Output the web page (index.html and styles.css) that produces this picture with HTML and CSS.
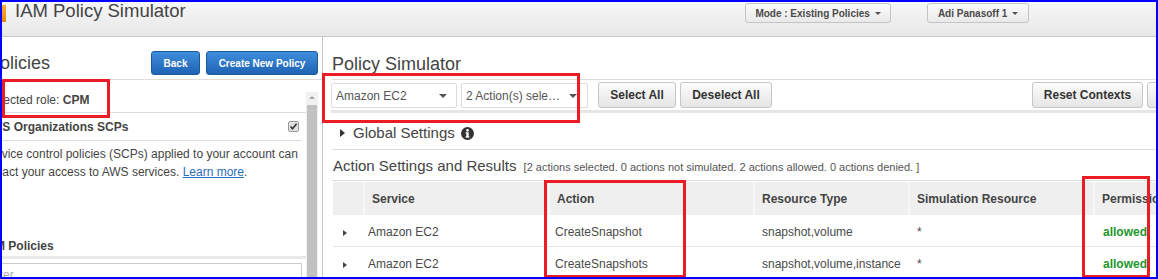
FILE: index.html
```html
<!DOCTYPE html>
<html lang="en">
<head>
    <meta charset="UTF-8">
    <title>IAM Policy Simulator</title>
    <link rel="stylesheet" href="styles.css">
</head>
<body>
<div class="page">
    <header class="topbar">
        <div class="brand">
            <span class="logo"></span>
            <span class="app-title">IAM Policy Simulator</span>
        </div>
        <div class="top-actions">
            <button class="top-btn mode-btn">Mode : Existing Policies <span class="caret"></span></button>
            <button class="top-btn user-btn">Adi Panasoff 1 <span class="caret"></span></button>
        </div>
    </header>

    <div class="main">
        <!-- left: policies -->
        <aside class="left">
            <div class="left-head">
                <h2 class="left-title">Policies</h2>
                <div class="left-btns">
                    <button class="btn-blue back-btn">Back</button>
                    <button class="btn-blue new-btn">Create New Policy</button>
                </div>
            </div>
            <div class="left-body">
                <div class="left-scroll">
                    <div class="role-row">Selected role: <b>CPM</b></div>
                    <div class="scp-head">
                        <span>AWS Organizations SCPs</span>
                        <svg class="check" width="11" height="11" viewBox="0 0 11 11">
                            <rect x="0.5" y="0.5" width="10" height="10" rx="1.5" fill="#e2e2e2" stroke="#9a9a9a"/>
                            <path d="M2.5 5.5 L4.5 7.8 L8.6 2.8" fill="none" stroke="#333" stroke-width="1.6"/>
                        </svg>
                    </div>
                    <p class="scp-desc">Service control policies (SCPs) applied to your account can<br>impact your access to AWS services. <a href="#">Learn more</a>.</p>
                    <div class="iam-head">IAM Policies</div>
                    <input class="filter" type="text" placeholder="Filter">
                </div>
                <div class="scrollbar">
                    <span class="scroll-up"></span>
                    <span class="scroll-thumb"></span>
                </div>
            </div>
        </aside>

        <!-- right: simulator -->
        <section class="right">
            <div class="right-inner">
                <h1 class="sim-title">Policy Simulator</h1>
                <div class="toolbar">
                    <div class="select select-service"><span class="select-text">Amazon EC2</span><span class="select-caret"></span></div>
                    <div class="select select-actions"><span class="select-text">2 Action(s) selected</span><span class="select-caret"></span></div>
                    <button class="tb-btn select-all">Select All</button>
                    <button class="tb-btn deselect-all">Deselect All</button>
                    <button class="tb-btn reset-btn">Reset Contexts</button>
                    <button class="tb-btn clear-btn">Clear Results</button>
                </div>
                <div class="global-row">
                    <span class="tri"></span>
                    <span>Global Settings</span>
                    <svg class="info" width="13" height="13" viewBox="0 0 13 13">
                        <circle cx="6.5" cy="6.5" r="6.5" fill="#333"/>
                        <circle cx="6.5" cy="3.4" r="1.3" fill="#fff"/>
                        <rect x="5.3" y="5.3" width="2.4" height="5" fill="#fff"/>
                        <rect x="4.6" y="9.4" width="3.8" height="1.2" fill="#fff"/>
                        <rect x="4.6" y="5.3" width="1.2" height="1.1" fill="#fff"/>
                    </svg>
                </div>
                <div class="results-head">Action Settings and Results <span class="summary">[2 actions selected. 0 actions not simulated. 2 actions allowed. 0 actions denied. ]</span></div>
                <table class="results">
                    <colgroup>
                        <col class="c-exp"><col class="c-service"><col class="c-action"><col class="c-type"><col class="c-res"><col class="c-perm">
                    </colgroup>
                    <tr>
                        <th></th>
                        <th>Service</th>
                        <th>Action</th>
                        <th>Resource Type</th>
                        <th>Simulation Resource</th>
                        <th>Permission</th>
                    </tr>
                    <tr>
                        <td class="exp"><span class="row-tri"></span></td>
                        <td class="service">Amazon EC2</td>
                        <td class="action">CreateSnapshot</td>
                        <td>snapshot,volume</td>
                        <td>*</td>
                        <td class="allowed">allowed</td>
                    </tr>
                    <tr>
                        <td class="exp"><span class="row-tri"></span></td>
                        <td class="service">Amazon EC2</td>
                        <td class="action">CreateSnapshots</td>
                        <td>snapshot,volume,instance</td>
                        <td>*</td>
                        <td class="allowed">allowed</td>
                    </tr>
                </table>
            </div>
        </section>
    </div>

    <!-- annotation boxes drawn over the screenshot -->
    <div class="callout callout-role"></div>
    <div class="callout callout-toolbar"></div>
    <div class="callout callout-action"></div>
    <div class="callout callout-perm"></div>
    <div class="frame"></div>
</div>
</body>
</html>
```

FILE: styles.css
```css
html, body {
    margin: 0;
    padding: 0;
}

.page {
    position: relative;
    width: 1158px;
    height: 279px;
    overflow: hidden;
    background: #fff;
    font-family: "Liberation Sans", Arial, sans-serif;
    color: #444;
}

button {
    font-family: "Liberation Sans", Arial, sans-serif;
    cursor: pointer;
}

/* top bar */
.topbar {
    display: flex;
    align-items: flex-start;
    height: 36px;
    border-bottom: 1px solid #c8c8c8;
    background: linear-gradient(#f7f7f7, #e8e8e8);
}

.brand {
    flex: 1;
    display: flex;
    align-items: flex-start;
}

.logo {
    width: 6px;
    height: 17px;
    margin-top: 5px;
    background: linear-gradient(#f9ab3c, #ee8a0e);
}

.app-title {
    margin-left: 9px;
    font-size: 18.5px;
    line-height: 21px;
    color: #444;
}

.top-actions {
    display: flex;
    gap: 36px;
    padding: 3px 129px 0 0;
}

.top-btn {
    height: 20px;
    padding: 0;
    border: 1px solid #c4c4c4;
    border-radius: 3px;
    background: linear-gradient(#fbfbfb, #e9e9e9);
    font-size: 10px;
    font-weight: bold;
    color: #4a4a4a;
}

.mode-btn { width: 146px; }
.user-btn { width: 102px; }

.caret {
    display: inline-block;
    margin-left: 2px;
    vertical-align: middle;
    border-top: 3px solid #555;
    border-left: 3px solid transparent;
    border-right: 3px solid transparent;
}

.main {
    display: flex;
    height: 242px;
}

/* left panel */
.left {
    flex-shrink: 0;
    width: 322px;
    border-right: 1px solid #c6c6c6;
    overflow: hidden;
}

.left-head {
    display: flex;
    justify-content: space-between;
    align-items: center;
    padding: 14px 4px 4px 0;
    border-bottom: 1px solid #ddd;
}

.left-title {
    margin: 0 0 0 -12px;
    font-size: 18px;
    font-weight: normal;
    color: #444;
}

.left-btns {
    display: flex;
    gap: 6px;
}

.btn-blue {
    height: 24px;
    padding: 0;
    border: 1px solid #1c5a9f;
    border-radius: 3px;
    background: linear-gradient(#3e8edb, #1f63b4);
    color: #fff;
    font-size: 10px;
    font-weight: bold;
}

.back-btn { width: 49px; }
.new-btn { width: 112px; }

.left-body {
    display: flex;
}

.left-scroll {
    flex-shrink: 0;
    width: 323px;
    margin-left: -17px;
    font-size: 12px;
}

.role-row {
    box-sizing: border-box;
    height: 33px;
    padding: 13px 0 0 3px;
    line-height: 14px;
    border-bottom: 1px solid #ddd;
}

.scp-head {
    box-sizing: border-box;
    display: flex;
    justify-content: space-between;
    align-items: center;
    height: 28px;
    margin-right: 4px;
    padding-right: 3px;
    border-bottom: 1px solid #ddd;
    font-weight: bold;
}

.scp-desc {
    margin: 4px 4px 0 0;
    line-height: 18px;
}

.scp-desc a {
    color: #2a6ebb;
}

.iam-head {
    margin-top: 57px;
    padding-bottom: 2px;
    line-height: 16px;
    font-weight: bold;
    border-bottom: 3px solid #e9e9e9;
}

.filter {
    box-sizing: border-box;
    width: 319px;
    height: 24px;
    margin-top: 4px;
    padding: 0 0 0 3px;
    border: 1px solid #ccc;
    font-family: "Liberation Sans", Arial, sans-serif;
    font-size: 12px;
}

.filter::placeholder {
    color: #aaa;
}

.scrollbar {
    display: flex;
    flex-direction: column;
    align-items: center;
    width: 12px;
    height: 190px;
    margin-top: 12px;
    background: #f1f1f1;
}

.scroll-up {
    margin: 4px 0 6px;
    border-bottom: 3px solid #a3a3a3;
    border-left: 3px solid transparent;
    border-right: 3px solid transparent;
}

.scroll-thumb {
    flex: 1;
    width: 10px;
    background: #c1c1c1;
}

/* right panel */
.right {
    flex: 1;
    overflow: hidden;
    padding-left: 9px;
}

.right-inner {
    width: 925px;
}

.sim-title {
    margin: 0;
    padding: 16px 0 4px;
    font-size: 18px;
    font-weight: normal;
    line-height: 22px;
    color: #444;
    border-bottom: 1px solid #ddd;
}

.toolbar {
    display: flex;
    align-items: flex-start;
    height: 28px;
    margin-left: -1px;
    padding-top: 2px;
    border-bottom: 3px solid #e6e6e6;
    box-sizing: content-box;
}

.select {
    box-sizing: border-box;
    display: flex;
    align-items: center;
    justify-content: space-between;
    height: 25px;
    margin-top: 1px;
    padding: 0 9px 0 4px;
    border: 1px solid #dcdcdc;
    border-radius: 2px;
    font-size: 12px;
    color: #555;
}

.select-service { width: 126px; }
.select-actions { width: 127px; margin-left: 4px; padding-right: 10px; }

.select-text {
    max-width: 98px;
    overflow: hidden;
    white-space: nowrap;
    text-overflow: ellipsis;
}

.select-caret {
    border-top: 4px solid #555;
    border-left: 4px solid transparent;
    border-right: 4px solid transparent;
}

.tb-btn {
    height: 26px;
    margin-left: 4px;
    padding: 0;
    border: 1px solid #c6c6c6;
    border-radius: 3px;
    background: linear-gradient(#fcfcfc, #e5e5e5);
    font-size: 12px;
    font-weight: bold;
    color: #333;
}

.select-all { width: 78px; margin-left: 10px; }
.deselect-all { width: 92px; }
.reset-btn { width: 111px; margin-left: auto; }
.clear-btn { width: 110px; }

.global-row {
    display: flex;
    align-items: center;
    padding: 11px 0 7px 8px;
    font-size: 15px;
    line-height: 18px;
    border-bottom: 1px solid #ddd;
}

.tri {
    margin-right: 8px;
    border-left: 5px solid #333;
    border-top: 4px solid transparent;
    border-bottom: 4px solid transparent;
}

.info {
    margin-left: 6px;
}

.results-head {
    padding: 8px 0 5px 1px;
    font-size: 15px;
    line-height: 16px;
    border-bottom: 1px solid #ddd;
}

.summary {
    margin-left: 3px;
    font-size: 11px;
    color: #555;
}

.results {
    width: 924px;
    margin: 1px 0 0 1px;
    border-collapse: collapse;
    table-layout: fixed;
    font-size: 12px;
}

.c-exp { width: 30px; }
.c-service { width: 185px; }
.c-action { width: 205px; }
.c-type { width: 155px; }
.c-res { width: 185px; }

.results th {
    height: 33px;
    padding: 0 0 0 9px;
    background: #efefef;
    text-align: left;
    font-weight: bold;
    color: #444;
}

.results th + th {
    box-shadow: inset 2px 0 #f8f8f8;
}

.results td {
    height: 28px;
    padding: 3px 0 0 9px;
    border-bottom: 1px solid #e4e4e4;
    color: #4a4a4a;
}

.results td.exp { padding-left: 10px; }
.results td.service { padding-left: 5px; }
.results td.action { padding-left: 7px; }

.results td.allowed {
    padding-left: 10px;
    font-weight: bold;
    color: #23962b;
}

.row-tri {
    display: inline-block;
    vertical-align: middle;
    border-left: 4px solid #444;
    border-top: 3px solid transparent;
    border-bottom: 3px solid transparent;
}

/* annotations */
.callout {
    position: absolute;
    box-sizing: border-box;
    border: 3px solid #ec1c24;
}

.callout-role { left: 2px; top: 79px; width: 108px; height: 39px; }
.callout-toolbar { left: 322px; top: 73px; width: 258px; height: 50px; }
.callout-action { left: 544px; top: 180px; width: 142px; height: 98px; }
.callout-perm { left: 1082px; top: 176px; width: 68px; height: 102px; }

.frame {
    position: absolute;
    inset: 0;
    border: 2px solid #0000ff;
    pointer-events: none;
}
```
